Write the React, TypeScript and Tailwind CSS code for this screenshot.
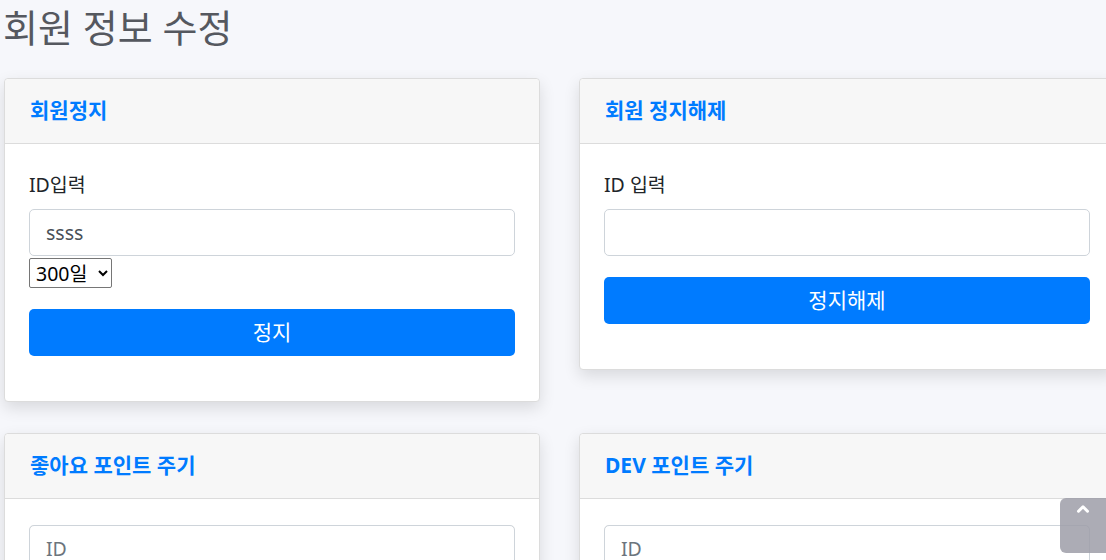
import { ChevronUp } from "lucide-react";

const FONT = { fontFamily: '"Noto Sans", "Noto Sans CJK KR", sans-serif' };

function Card({ title, children }: { title: string; children: React.ReactNode }) {
  return (
    <div className="w-[536px] rounded-[4px] border border-[#dcdcdc] bg-white shadow-[0_6px_16px_rgba(0,0,0,0.12)]">
      <div className="flex h-[65px] items-center border-b border-[#dcdcdc] bg-[#f7f7f7] px-[25px] rounded-t-[4px]">
        <span className="text-[21px] font-bold text-[#007bff]">{title}</span>
      </div>
      <div className="px-[24px] pt-[26px] pb-[45px]">{children}</div>
    </div>
  );
}

function Label({ text }: { text: string }) {
  return <div className="mb-[9px] h-[30px] text-[19.5px] leading-[30px] text-[#212529]">{text}</div>;
}

function Input({ value, placeholder }: { value?: string; placeholder?: string }) {
  return (
    <input
      defaultValue={value}
      placeholder={placeholder}
      className="block h-[47px] w-full rounded-[5px] border border-[#ced4da] bg-white px-[16px] text-[19.5px] text-[#495057] placeholder:text-[#6c757d] outline-none"
      style={FONT}
    />
  );
}

function Button({ text }: { text: string }) {
  return (
    <button
      className="mt-[21px] block h-[47px] w-full rounded-[5px] bg-[#007bff] text-[21px] text-white"
      style={FONT}
    >
      {text}
    </button>
  );
}

export default function App() {
  return (
    <div className="relative h-[560px] w-[1106px] overflow-hidden bg-[#f6f7fb]" style={FONT}>
      <h1 className="pl-[3px] text-[38px] leading-[54px] font-normal text-[#55585f]">회원 정보 수정</h1>

      <div className="mt-[24px] ml-[4px] grid w-[1120px] grid-cols-[536px_536px] items-start gap-x-[39px] gap-y-[31px]">
        <Card title="회원정지">
          <Label text="ID입력" />
          <Input value="ssss" />
          <select
            className="mt-[2px] block h-[30px] w-[83px] rounded-[2px] border border-[#767676] bg-white pl-[2px] text-[19.5px] text-black"
            style={FONT}
            defaultValue="300"
          >
            <option value="300">300일</option>
          </select>
          <Button text="정지" />
        </Card>

        <Card title="회원 정지해제">
          <Label text="ID 입력" />
          <Input />
          <Button text="정지해제" />
        </Card>

        <Card title="좋아요 포인트 주기">
          <div className="shadow-[inset_0_2px_3px_rgba(0,0,0,0.12)] rounded-[5px]">
            <Input placeholder="ID" />
          </div>
        </Card>

        <Card title="DEV 포인트 주기">
          <div className="shadow-[inset_0_2px_3px_rgba(0,0,0,0.12)] rounded-[5px]">
            <Input placeholder="ID" />
          </div>
        </Card>
      </div>

      <button className="absolute right-0 bottom-[7px] flex h-[55px] w-[46px] justify-center rounded-l-[6px] bg-[#9d9ea8]/85 pt-[2px]">
        <ChevronUp size={18} strokeWidth={4} color="white" />
      </button>
    </div>
  );
}
